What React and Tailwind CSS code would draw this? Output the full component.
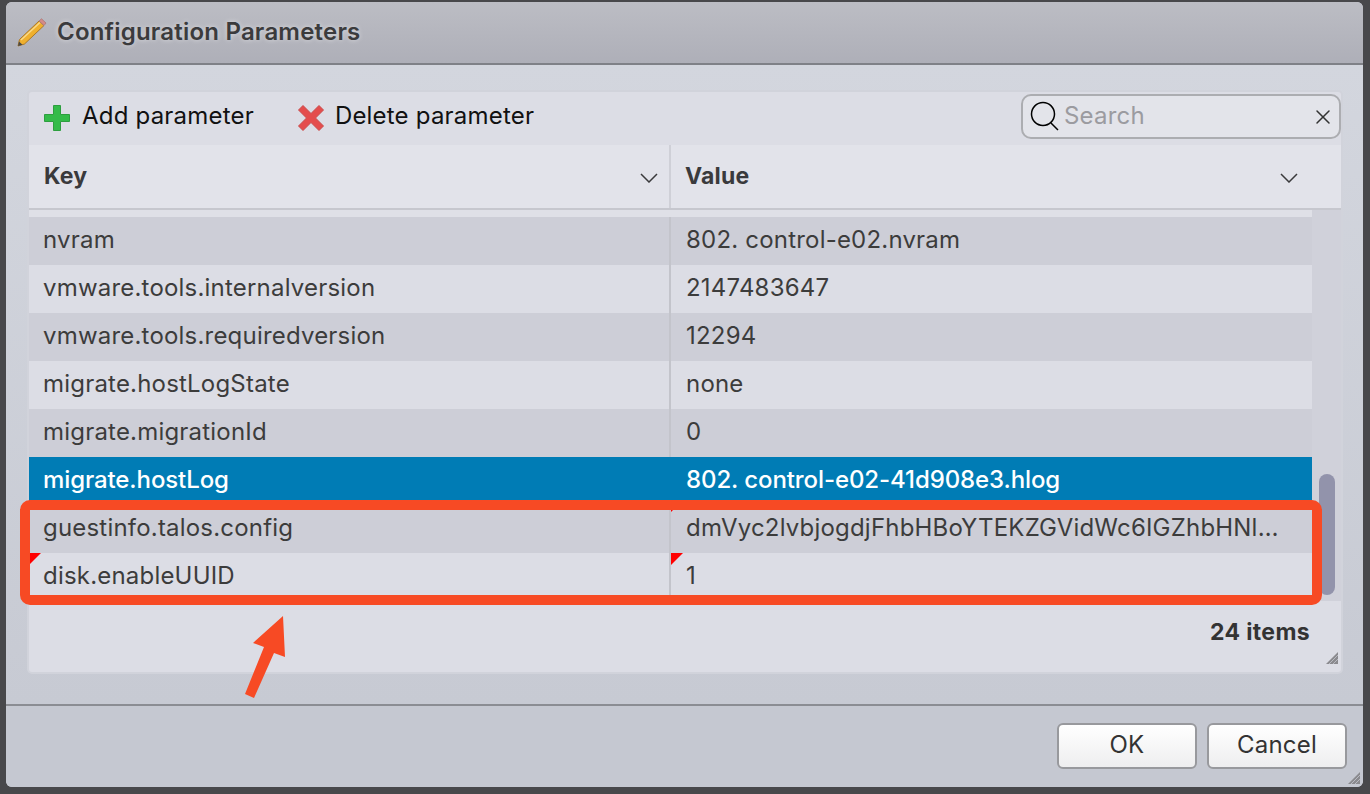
import { X } from 'lucide-react';

const ROWS = [
  { key: 'nvram', value: '802. control-e02.nvram', bg: 'bg-[#cdced7]' },
  { key: 'vmware.tools.internalversion', value: '2147483647', bg: 'bg-[#dcdde5]' },
  { key: 'vmware.tools.requiredversion', value: '12294', bg: 'bg-[#cdced7]' },
  { key: 'migrate.hostLogState', value: 'none', bg: 'bg-[#dcdde5]' },
  { key: 'migrate.migrationId', value: '0', bg: 'bg-[#cdced7]' },
  { key: 'migrate.hostLog', value: '802. control-e02-41d908e3.hlog', selected: true },
  { key: 'guestinfo.talos.config', value: 'dmVyc2lvbjogdjFhbHBoYTEKZGVidWc6IGZhbHNl…', bg: 'bg-[#cdced7]', flag: 'small' },
  { key: 'disk.enableUUID', value: '1', bg: 'bg-[#dcdde5]', flag: 'big' },
];

function Corner({ size }) {
  const s = size === 'big' ? 'border-t-[12px] border-r-[12px]' : 'border-t-[7px] border-r-[7px]';
  return <span className={`absolute left-0 top-0 w-0 h-0 border-t-[#ff0000] border-r-transparent ${s}`} />;
}

function Grip({ className }) {
  return (
    <svg width="14" height="14" viewBox="0 0 14 14" className={className}>
      <path d="M13 1 L13 13 L1 13 Z" fill="#8a8a8e" />
      <path d="M13 4 L4 13 M13 8 L8 13" stroke="#b9bac2" strokeWidth="1" />
    </svg>
  );
}

function Chevron() {
  return (
    <svg width="18" height="10" viewBox="0 0 18 10" fill="none" stroke="#3a3a3c" strokeWidth="1.5" className="mt-[3px]">
      <path d="M1 1 L9 9 L17 1" />
    </svg>
  );
}

function Row({ row }) {
  const tone = row.selected ? 'bg-[#007cb5] text-white font-medium tracking-[-0.1px]' : `${row.bg} text-[#3c3c3c]`;
  return (
    <div className={`flex h-12 items-center ${tone}`}>
      <div className={`relative flex h-full w-[642px] items-center pb-[2px] pl-[14px] ${row.selected ? '' : 'border-r-2 border-[#c3c4cb]'}`}>
        {row.flag === 'big' && <Corner size="big" />}
        <span>{row.key}</span>
      </div>
      <div className="relative flex h-full min-w-0 flex-1 items-center pb-[2px] pl-[15px] pr-6">
        {row.flag && <Corner size={row.flag} />}
        <span className="whitespace-nowrap">{row.value}</span>
      </div>
    </div>
  );
}

export default function App() {
  return (
    <div className="relative h-[794px] w-[1370px] overflow-hidden bg-[#48484b] pb-[7px] pl-[6px] pr-[7px] pt-[2px] text-[24px] tracking-[0.2px] [font-family:Inter,'Liberation_Sans',sans-serif]">
      <div className="relative flex h-full flex-col overflow-hidden rounded-[6px] bg-[#ced1da]">
        {/* Title bar */}
        <div className="flex h-[63px] shrink-0 items-center gap-[10px] border-b-2 border-[#7f8187] bg-gradient-to-b from-[#bcbdc4] to-[#aeafb8] pl-[11px]">
          <svg width="30" height="30" viewBox="0 0 30 30">
            <path d="M1 28 L2.5 21.5 L22 3 L27 7.5 L7.5 26 Z" fill="#efb02e" stroke="#a9782a" strokeWidth="1" />
            <path d="M4 22 L23 4.5" stroke="#f8d98a" strokeWidth="1.5" />
            <path d="M22 3 L24.5 0.8 L29 5 L27 7.5 Z" fill="#d58a86" stroke="#a9787a" strokeWidth="0.8" />
            <path d="M1 28 L2 23.5 L5.5 26.7 Z" fill="#4a4a4a" />
          </svg>
          <span className="pb-[1px] text-[24px] font-semibold tracking-[0.2px] text-[#3b3b3d] [text-shadow:0_0_5px_rgba(255,255,255,0.55)]">Configuration Parameters</span>
        </div>

        {/* Body */}
        <div className="flex h-[641px] shrink-0 flex-col border-b-2 border-[#8b8d93] bg-gradient-to-b from-[#d3d6de] to-[#c7cad3] pl-[21px] pr-[20px] pt-[25px]">
          <div className="flex h-[584px] flex-col overflow-hidden rounded-[5px] border-2 border-[#d1d3db] bg-[#dcdde5]">
            {/* Toolbar */}
            <div className="flex h-[53px] shrink-0 items-center pb-[5px] pl-[14px] text-[#111]">
              <svg width="28" height="28" viewBox="0 0 28 28" className="mr-[11px] mt-[4px]">
                <path d="M10.5 1.5 H17.5 V10.5 H26.5 V17.5 H17.5 V26.5 H10.5 V17.5 H1.5 V10.5 H10.5 Z" fill="#34bb49" stroke="#2d9e3f" strokeWidth="1" strokeLinejoin="round" />
              </svg>
              <span>Add parameter</span>
              <svg width="28" height="28" viewBox="0 0 28 28" className="ml-[43px] mr-[10px] mt-[4px]">
                <path d="M6 1.5 L14 9.5 L22 1.5 L26.5 6 L18.5 14 L26.5 22 L22 26.5 L14 18.5 L6 26.5 L1.5 22 L9.5 14 L1.5 6 Z" fill="#e44d4d" stroke="#c94a4a" strokeWidth="1" strokeLinejoin="round" />
              </svg>
              <span>Delete parameter</span>
              <div className="ml-auto flex h-[45px] w-[320px] items-center rounded-[10px] border-2 border-[#acadb1] bg-[#e3e4ea] pl-[6px] pr-[4px]">
                <svg width="32" height="32" viewBox="0 0 32 32" fill="none" stroke="#000" strokeWidth="1.5" className="mt-[1px]">
                  <circle cx="14" cy="13" r="11.5" />
                  <path d="M22 22 L29 29" />
                </svg>
                <span className="ml-[3px] flex-1 text-[#9b9ba0]">Search</span>
                <X size={24} strokeWidth={1.5} className="mt-[2px] text-[#333]" />
              </div>
            </div>

            {/* Table header */}
            <div className="flex h-[65px] shrink-0 items-center border-b-2 border-[#c6c7ce] bg-[#e2e3ea] text-[23px] font-bold text-[#3a3a3c]">
              <div className="flex h-full w-[642px] items-center justify-between border-r-2 border-[#cfd0d7] pl-[15px] pr-[11px]">
                <span>Key</span>
                <Chevron />
              </div>
              <div className="flex h-full flex-1 items-center justify-between pl-[14px] pr-[43px]">
                <span>Value</span>
                <Chevron />
              </div>
            </div>

            {/* Rows with scrollbar */}
            <div className="flex h-[391px] shrink-0 bg-[#d0d1da]">
              <div className="flex w-[1283px] shrink-0 flex-col bg-[#dfe0e7] pt-[7px]">
                {ROWS.map(r => <Row key={r.key} row={r} />)}
              </div>
              <div className="flex flex-1 flex-col justify-end pb-[6px] pl-[7px] pr-[6px]">
                <div className="h-[121px] w-4 rounded-full bg-[#9293ab]" />
              </div>
            </div>

            {/* Footer */}
            <div className="relative flex flex-1 items-start justify-end pr-[31px] pt-[14px] text-[23px] font-bold tracking-[0.35px] text-[#333]">
              <span>24 items</span>
              <Grip className="absolute bottom-[7px] right-[2px]" />
            </div>
          </div>
        </div>

        {/* Dialog buttons */}
        <div className="relative flex flex-1 items-start justify-end gap-[10px] bg-[#c5c8d1] pr-[16px] pt-[17px] text-[#333]">
          <button className="h-[46px] w-[140px] rounded-[6px] border-2 border-[#98999d] bg-gradient-to-b from-white to-[#eeeeef] pb-[2px]">OK</button>
          <button className="h-[46px] w-[140px] rounded-[6px] border-2 border-[#98999d] bg-gradient-to-b from-white to-[#eeeeef] pb-[2px]">Cancel</button>
          <Grip className="absolute bottom-[2px] right-[2px]" />
        </div>

        {/* Annotation: highlight box */}
        <div className="pointer-events-none absolute left-[14px] top-[498px] h-[105px] w-[1302px] rounded-[10px] border-[10px] border-[#f74a24]" />
        {/* Annotation: arrow */}
        <svg width="44" height="86" viewBox="0 0 44 86" className="pointer-events-none absolute left-[238px] top-[614px]">
          <path d="M39 0 L41 41 L30 37 L10 82 L1 78 L20 31 L9 27 Z" fill="#f74a24" />
        </svg>
      </div>
    </div>
  );
}
